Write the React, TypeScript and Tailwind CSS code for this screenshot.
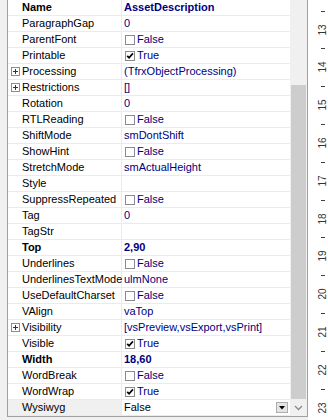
import React from 'react';

interface PropRow {
  name: string;
  value?: string;
  check?: boolean;
  bold?: boolean;
  expand?: boolean;
  selected?: boolean;
}

const rows: PropRow[] = [
  { name: 'Name', value: 'AssetDescription', bold: true },
  { name: 'ParagraphGap', value: '0' },
  { name: 'ParentFont', check: false },
  { name: 'Printable', check: true },
  { name: 'Processing', value: '(TfrxObjectProcessing)', expand: true },
  { name: 'Restrictions', value: '[]', expand: true },
  { name: 'Rotation', value: '0' },
  { name: 'RTLReading', check: false },
  { name: 'ShiftMode', value: 'smDontShift' },
  { name: 'ShowHint', check: false },
  { name: 'StretchMode', value: 'smActualHeight' },
  { name: 'Style', value: '' },
  { name: 'SuppressRepeated', check: false },
  { name: 'Tag', value: '0' },
  { name: 'TagStr', value: '' },
  { name: 'Top', value: '2,90', bold: true },
  { name: 'Underlines', check: false },
  { name: 'UnderlinesTextMode', value: 'ulmNone' },
  { name: 'UseDefaultCharset', check: false },
  { name: 'VAlign', value: 'vaTop' },
  { name: 'Visibility', value: '[vsPreview,vsExport,vsPrint]', expand: true },
  { name: 'Visible', check: true },
  { name: 'Width', value: '18,60', bold: true },
  { name: 'WordBreak', check: false },
  { name: 'WordWrap', check: true },
  { name: 'Wysiwyg', value: 'False', selected: true },
];

const PlusBox = () => (
  <svg width="9" height="9" viewBox="0 0 9 9" className="shrink-0">
    <rect x="0.5" y="0.5" width="8" height="8" fill="#fff" stroke="#8c8c8c" />
    <path d="M2 4.5h5M4.5 2v5" stroke="#333" strokeWidth="1" />
  </svg>
);

const CheckBox = ({ checked }: { checked: boolean }) => (
  <svg width="10" height="10" viewBox="0 0 10 10" className="shrink-0">
    <rect x="0.5" y="0.5" width="9" height="9" fill="#fff" stroke="#8a8a8a" />
    {checked && <path d="M2.2 4.8l1.9 2 3.8-4.4" fill="none" stroke="#000" strokeWidth="1.7" />}
  </svg>
);

const Row = ({ row }: { row: PropRow }) => {
  const valueColor = row.selected ? 'text-black' : 'text-[#000080]';
  return (
    <div className="flex h-[16px] border-b border-[#ebebeb]">
      <div
        className={`w-[114px] shrink-0 flex items-center pl-[3px] border-r border-[#ebebeb] ${
          row.selected ? 'bg-[#f0f0f0]' : ''
        }`}
      >
        {row.expand ? <PlusBox /> : <div className="w-[9px] shrink-0" />}
        <span className={`ml-[2px] whitespace-nowrap text-black ${row.bold ? 'font-bold' : ''}`}>{row.name}</span>
      </div>
      <div className="flex-1 flex items-center pl-[2px] min-w-0">
        {row.check !== undefined ? (
          <div className="flex items-center">
            <div className="ml-[1px]">
              <CheckBox checked={row.check} />
            </div>
            <span className={`ml-[2px] ${valueColor}`}>{row.check ? 'True' : 'False'}</span>
          </div>
        ) : (
          <span className={`whitespace-nowrap ${valueColor} ${row.bold ? 'font-bold' : ''}`}>{row.value}</span>
        )}
        {row.selected && (
          <div className="ml-auto mr-[2px] w-[12px] h-[11px] bg-[#e5e5e5] border border-[#adadad] flex items-center justify-center">
            <svg width="6" height="4" viewBox="0 0 6 4">
              <path d="M0 0h6L3 3.5z" fill="#000" />
            </svg>
          </div>
        )}
      </div>
    </div>
  );
};

const Ruler = () => {
  const numbers = [13, 14, 15, 16, 17, 18, 19, 20, 21, 22, 23];
  return (
    <div className="relative w-[20px] h-full bg-white">
      {numbers.map((n, i) => (
        <div
          key={`t${n}`}
          className="absolute left-[13px] w-[4px] h-px bg-[#404040]"
          style={{ top: Math.round(10.6 + i * 37.8) }}
        />
      ))}
      {numbers.map((n, i) => (
        <div
          key={n}
          className="absolute left-[15px] -translate-x-1/2 -translate-y-1/2 -rotate-90 text-[10px] leading-[10px] text-[#333]"
          style={{ top: 29.5 + i * 37.8 }}
        >
          {n}
        </div>
      ))}
    </div>
  );
};

export default function App() {
  return (
    <div className="w-[328px] h-[420px] flex bg-white overflow-hidden font-['Liberation_Sans',Arial,sans-serif] text-[11px] leading-[15px]">
      <div className="w-[308px] h-full shrink-0 bg-[#f0f0f0] pl-[7px]">
        <div className="flex h-[417px] bg-white border-l border-r border-b border-[#a0a0a0]">
          <div className="w-[282px] shrink-0 flex flex-col">
            {rows.map((row) => (
              <Row key={row.name} row={row} />
            ))}
          </div>
          <div className="w-[17px] shrink-0 bg-[#f0f0f0] flex flex-col">
            <div className="h-[85px]" />
            <div className="h-[314px] mx-[1px] bg-[#cdcdcd]" />
            <div className="flex-1 flex items-center justify-center">
              <svg width="9" height="6" viewBox="0 0 9 6">
                <path d="M1 1l3.5 3.5L8 1" fill="none" stroke="#8a8a8a" strokeWidth="1.3" />
              </svg>
            </div>
          </div>
        </div>
      </div>
      <Ruler />
    </div>
  );
}
